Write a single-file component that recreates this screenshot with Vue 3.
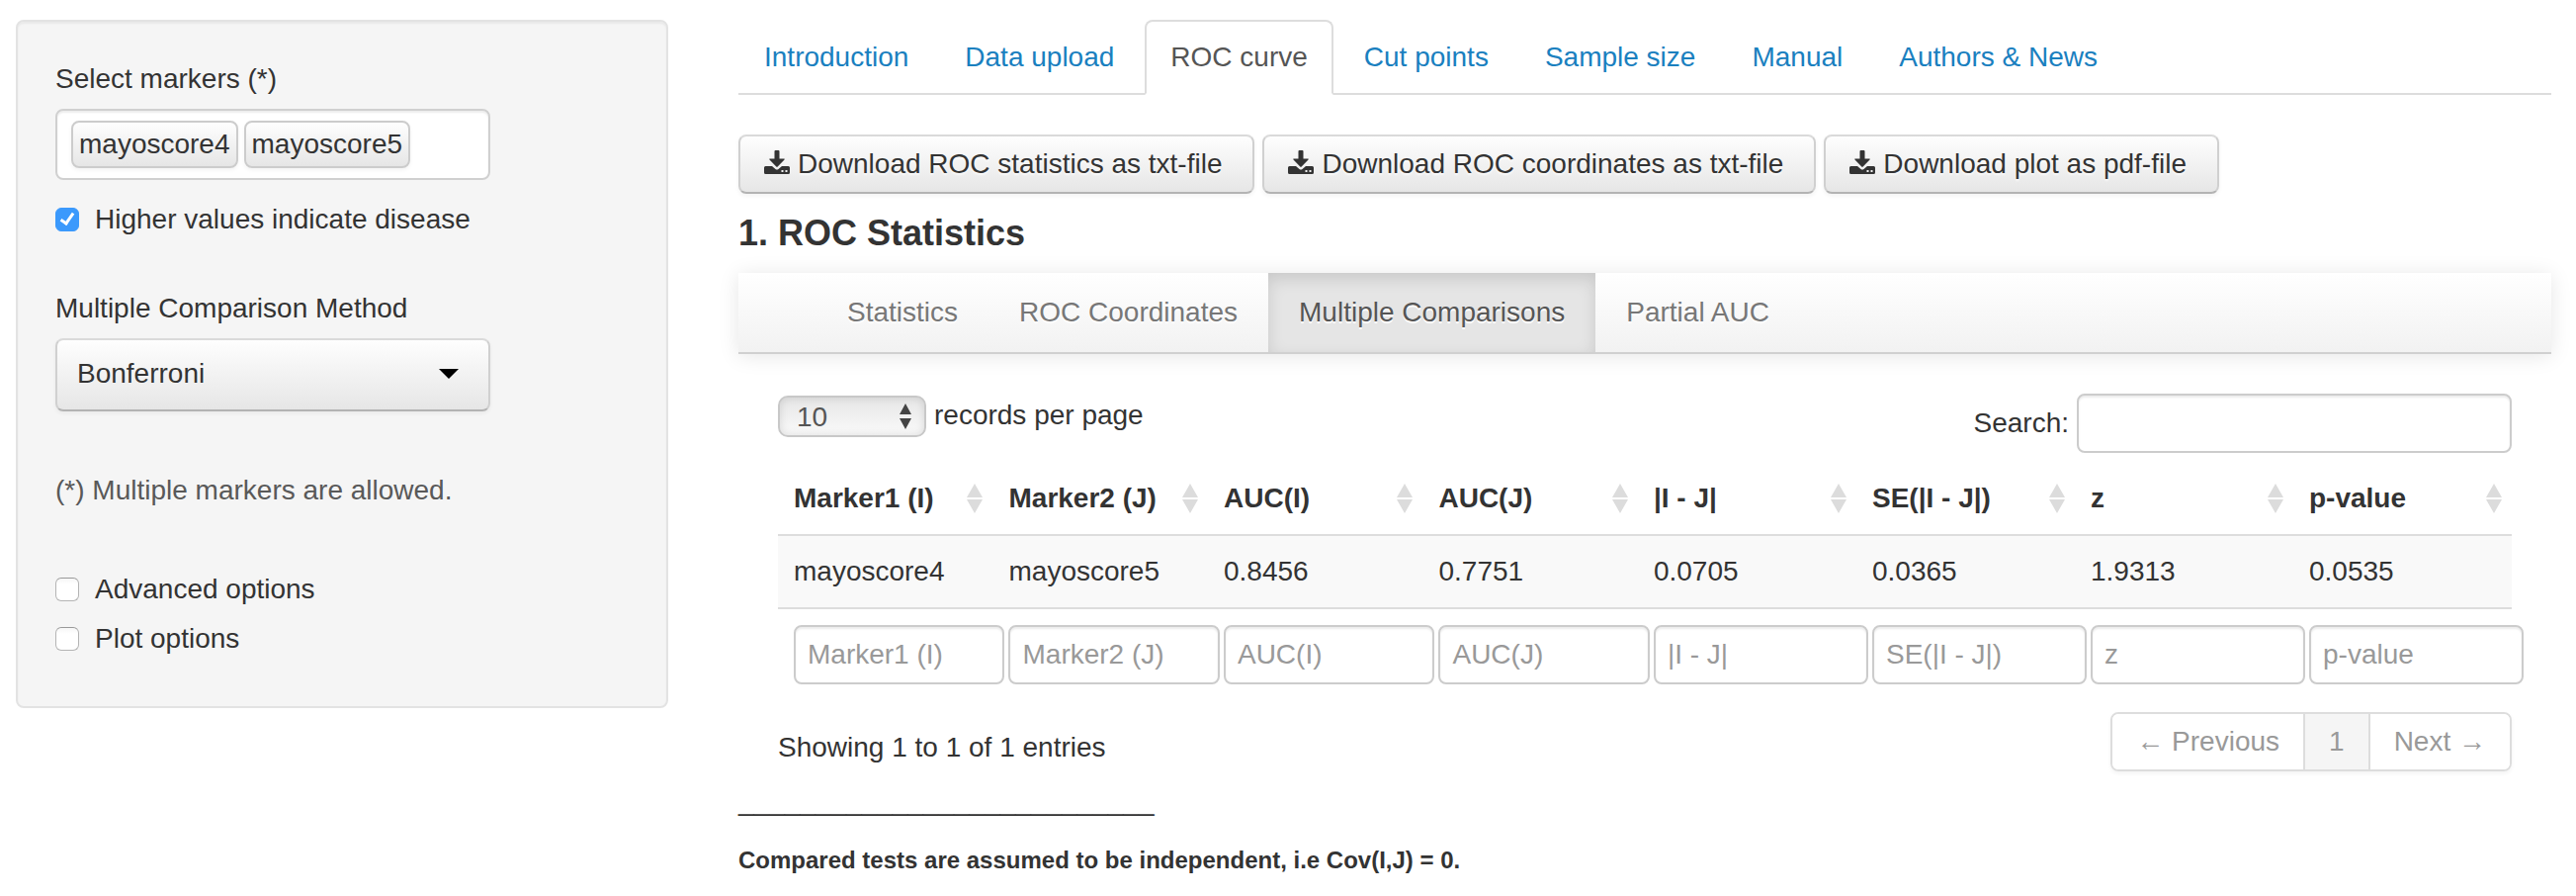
<script setup>
import { ref } from 'vue'

const tabs = ['Introduction', 'Data upload', 'ROC curve', 'Cut points', 'Sample size', 'Manual', 'Authors & News']
const activeTab = ref('ROC curve')

const downloads = ['Download ROC statistics as txt-file', 'Download ROC coordinates as txt-file', 'Download plot as pdf-file']

const sections = ['Statistics', 'ROC Coordinates', 'Multiple Comparisons', 'Partial AUC']
const activeSection = ref('Multiple Comparisons')

const markers = ['mayoscore4', 'mayoscore5']
const higher = ref(true)
const advanced = ref(false)
const plot = ref(false)

const columns = ['Marker1 (I)', 'Marker2 (J)', 'AUC(I)', 'AUC(J)', '|I - J|', 'SE(|I - J|)', 'z', 'p-value']
const rows = [['mayoscore4', 'mayoscore5', '0.8456', '0.7751', '0.0705', '0.0365', '1.9313', '0.0535']]
const rule = '_'.repeat(27)
</script>

<template>
  <div class="page">
    <aside class="well">
      <form class="form" @submit.prevent>
        <span id="markers-label" class="label">Select markers (*)</span>
        <div class="selectize" role="group" aria-labelledby="markers-label">
          <span v-for="m in markers" :key="m" class="item">{{ m }}</span>
        </div>
        <label class="check first"><input v-model="higher" type="checkbox" />Higher values indicate disease</label>
        <label class="label" for="method">Multiple Comparison Method</label>
        <div class="select-wrap">
          <select id="method" class="method">
            <option>Bonferroni</option>
          </select>
          <svg class="caret" viewBox="0 0 20 10" aria-hidden="true"><path d="M0 0h20L10 10z" /></svg>
        </div>
        <p class="help">(*) Multiple markers are allowed.</p>
        <label class="check"><input v-model="advanced" type="checkbox" />Advanced options</label>
        <label class="check"><input v-model="plot" type="checkbox" />Plot options</label>
      </form>
    </aside>

    <main class="main">
      <nav class="tabs">
        <a v-for="t in tabs" :key="t" href="#" class="tab" :class="{ active: t === activeTab }" @click.prevent="activeTab = t">{{ t }}</a>
      </nav>

      <div class="downloads">
        <button v-for="d in downloads" :key="d" type="button" class="btn">
          <svg class="dl" viewBox="0 0 26 24" aria-hidden="true">
            <path d="M10.500 1q0-1 1-1h3q1 0 1 1v7.500h4.500q1.500 0 .5 1L13.700 16.600q-.7.6-1.400 0L5.500 9.500q-1-1 .5-1h4.500z" />
            <path fill-rule="evenodd" d="M1.500 16H8l3.500 3q1.500 1.200 3 0l3.500-3h6.500q1.500 0 1.500 1.500v5q0 1.500-1.500 1.500h-23Q0 24 0 22.500v-5Q0 16 1.500 16zM17.500 20v2h2v-2zM21.500 20v2h2v-2z" />
          </svg>
          <span>{{ d }}</span>
        </button>
      </div>

      <h4 class="heading">1. ROC Statistics</h4>

      <nav class="navbar">
        <a v-for="s in sections" :key="s" href="#" class="nav-link" :class="{ active: s === activeSection }" @click.prevent="activeSection = s">{{ s }}</a>
      </nav>

      <section class="data">
        <div class="tools">
          <label class="length">
            <span class="length-wrap">
              <select class="length-select">
                <option>10</option>
              </select>
              <svg class="updown" viewBox="0 0 14 26" aria-hidden="true"><path d="M7 0l6 11H1zM1 15h12L7 26z" /></svg>
            </span>
            <span>records per page</span>
          </label>
          <label class="search">Search:<input type="text" class="input search-input" /></label>
        </div>

        <table class="table">
          <colgroup>
            <col v-for="(c, i) in columns" :key="c" :class="{ narrow: i < 4 }" />
          </colgroup>
          <thead>
            <tr>
              <th v-for="c in columns" :key="c" scope="col">
                <div class="th">
                  <span>{{ c }}</span>
                  <svg class="sort" viewBox="0 0 16 30" aria-hidden="true"><path d="M8 0l8 14H0zM0 16h16L8 30z" /></svg>
                </div>
              </th>
            </tr>
          </thead>
          <tbody>
            <tr v-for="(r, i) in rows" :key="i">
              <td v-for="(v, j) in r" :key="j">{{ v }}</td>
            </tr>
          </tbody>
          <tfoot>
            <tr>
              <td v-for="c in columns" :key="c"><input type="text" class="input filter" :placeholder="c" :aria-label="c" /></td>
            </tr>
          </tfoot>
        </table>

        <div class="foot">
          <p class="info">Showing 1 to 1 of 1 entries</p>
          <div class="pager">
            <button type="button" class="pg">← Previous</button>
            <button type="button" class="pg current">1</button>
            <button type="button" class="pg">Next →</button>
          </div>
        </div>
      </section>

      <p class="rule">{{ rule }}</p>
      <h6 class="note">Compared tests are assumed to be independent, i.e Cov(I,J) = 0.</h6>
    </main>
  </div>
</template>

<style>
body {
  margin: 0;
  background: #fff;
}
</style>

<style scoped>
.page {
  display: grid;
  grid-template-columns: 660fr 1834fr;
  align-items: start;
  gap: 71px;
  padding: 20px 25px 0 16px;
  font: 28px/40px "Liberation Sans", Arial, sans-serif;
  color: #333;
}
.page *,
.page *::before {
  box-sizing: border-box;
}
input,
select,
button {
  font: inherit;
  color: inherit;
  margin: 0;
}
.well {
  padding: 38px;
  background: #f5f5f5;
  border: 2px solid #e3e3e3;
  border-radius: 8px;
  box-shadow: inset 0 2px 2px rgba(0, 0, 0, 0.05);
}
.form {
  display: flex;
  flex-direction: column;
  align-items: flex-start;
}
.label {
  margin-bottom: 10px;
}
.selectize {
  display: flex;
  gap: 6px;
  width: 440px;
  max-width: 100%;
  height: 72px;
  padding: 10px 14px;
  background: #fff;
  border: 2px solid #d0d0d0;
  border-radius: 8px;
  box-shadow: inset 0 2px 2px rgba(0, 0, 0, 0.08);
}
.item {
  height: 48px;
  padding: 2px 6px;
  border: 2px solid #ccc;
  border-radius: 8px;
  background: linear-gradient(#fefefe, #f2f2f2 50%, #e6e6e6);
  box-shadow: 0 2px 4px rgba(0, 0, 0, 0.05);
}
.check {
  display: flex;
  align-items: center;
  gap: 16px;
  margin-bottom: 10px;
}
.check.first {
  margin: 20px 0 50px;
}
.check input {
  appearance: none;
  width: 24px;
  height: 24px;
  display: grid;
  place-items: center;
  background: linear-gradient(#f6f6f6, #fff 6px);
  border: 1px solid #b4b4b4;
  border-top-color: #999;
  border-radius: 6px;
}
.check input:checked {
  background: #3b99fc;
  border-color: #3b99fc;
}
.check input:checked::before {
  content: "";
  width: 8px;
  height: 14px;
  margin-bottom: 4px;
  border: solid #fff;
  border-width: 0 3px 3px 0;
  transform: rotate(35deg);
}
.select-wrap {
  position: relative;
  width: 440px;
  max-width: 100%;
}
.method {
  appearance: none;
  display: block;
  width: 100%;
  height: 74px;
  padding: 0 60px 2px 20px;
  border: 2px solid;
  border-color: #dadada #d0d0d0 #b3b3b3;
  border-radius: 8px;
  background: linear-gradient(#fefefe, #f2f2f2 50%, #e6e6e6);
  box-shadow: 0 2px 4px rgba(0, 0, 0, 0.05);
}
.caret {
  position: absolute;
  right: 32px;
  top: 31px;
  width: 20px;
  height: 10px;
  fill: #000;
  pointer-events: none;
}
.help {
  margin: 60px 0 60px;
  color: #595959;
}
.tabs {
  display: flex;
  gap: 5px;
  border-bottom: 2px solid #ddd;
}
.tab {
  margin-bottom: -2px;
  padding: 16px 24px;
  border: 2px solid transparent;
  border-radius: 8px 8px 0 0;
  color: #1a80bf;
  text-decoration: none;
}
.tab.active {
  color: #555;
  background: #fff;
  border-color: #ddd #ddd #fff;
}
.downloads {
  display: flex;
  flex-wrap: wrap;
  gap: 8px;
  margin-top: 40px;
}
.btn {
  display: flex;
  align-items: center;
  gap: 8px;
  height: 60px;
  padding: 0 31px 0 24px;
  border: 2px solid;
  border-color: #dadada #d0d0d0 #b3b3b3;
  border-radius: 8px;
  background: linear-gradient(#fefefe, #f2f2f2 50%, #e6e6e6);
  box-shadow: 0 2px 4px rgba(0, 0, 0, 0.05);
  text-shadow: 0 2px 2px rgba(255, 255, 255, 0.75);
}
.dl {
  width: 26px;
  height: 24px;
  margin-bottom: 4px;
  fill: #333;
}
.heading {
  margin: 20px 0;
  font-size: 36px;
  line-height: 40px;
}
.navbar {
  display: flex;
  height: 82px;
  padding-left: 79px;
  border-bottom: 2px solid #d0d0d0;
  background: linear-gradient(#fff, #f2f2f2);
  box-shadow: 0 2px 20px rgba(0, 0, 0, 0.1);
}
.nav-link {
  padding: 20px 31px;
  color: #777;
  text-decoration: none;
  text-shadow: 0 2px 0 #fff;
}
.nav-link.active {
  color: #555;
  background: #e5e5e5;
  box-shadow: inset 0 6px 16px rgba(0, 0, 0, 0.125);
}
.data {
  padding: 40px 40px 0;
}
.tools {
  display: flex;
  justify-content: space-between;
  align-items: flex-start;
}
.length,
.search {
  display: flex;
  align-items: center;
  gap: 8px;
}
.length-wrap {
  position: relative;
  margin-top: 2px;
}
.length-select {
  appearance: none;
  display: block;
  width: 150px;
  height: 42px;
  padding: 0 40px 0 17px;
  border: 2px solid #c8c8c8;
  border-radius: 10px;
  background: linear-gradient(#e6e6e6, #fafafa);
  box-shadow: inset 0 0 8px rgba(0, 0, 0, 0.12);
  color: #555;
}
.updown {
  position: absolute;
  right: 14px;
  top: 8px;
  width: 14px;
  height: 26px;
  fill: #444;
  pointer-events: none;
}
.input {
  height: 60px;
  padding: 0 12px;
  border: 2px solid #ccc;
  border-radius: 8px;
  background: #fff;
  box-shadow: inset 0 2px 2px rgba(0, 0, 0, 0.075);
}
.input::placeholder {
  color: #999;
  opacity: 1;
}
.search-input {
  width: 440px;
}
.table {
  width: 100%;
  table-layout: fixed;
  border-collapse: separate;
  border-spacing: 0;
}
.narrow {
  width: 12.4%;
}
th {
  padding: 26px 10px 16px 16px;
  text-align: left;
}
.th {
  display: flex;
  justify-content: space-between;
  align-items: center;
}
.sort {
  width: 16px;
  height: 30px;
  fill: #dcdcdc;
}
tbody td {
  height: 74px;
  padding: 0 16px;
  border-top: 2px solid #ddd;
  background: #f9f9f9;
}
tfoot td {
  padding: 16px 0 16px 16px;
  border-top: 2px solid #ddd;
}
.filter {
  display: block;
  width: calc(100% + 12px);
}
.foot {
  display: flex;
  justify-content: space-between;
  align-items: flex-start;
  margin-top: 12px;
}
.info {
  margin: 16px 0 0;
}
.pager {
  display: flex;
  border: 2px solid #ddd;
  border-radius: 8px;
  box-shadow: 0 2px 4px rgba(0, 0, 0, 0.05);
  overflow: hidden;
}
.pg {
  height: 56px;
  padding: 0 24px;
  border: 0;
  background: #fff;
  color: #999;
}
.pg.current {
  background: #f5f5f5;
  border: solid #ddd;
  border-width: 0 2px;
}
.rule {
  margin: 10px 0 20px;
}
.note {
  margin: 20px 0 0;
  font-size: 24px;
  line-height: 40px;
}
</style>
